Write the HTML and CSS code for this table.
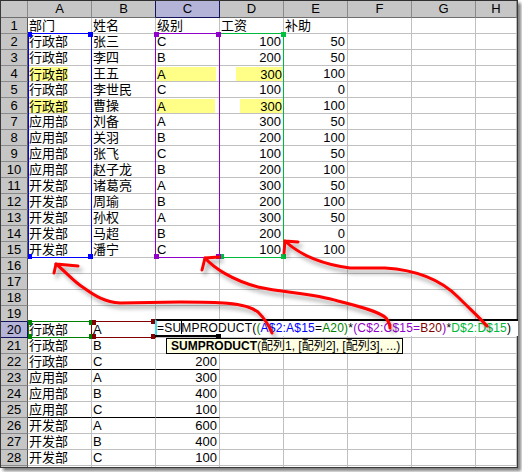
FILE: index.html
```html
<!DOCTYPE html>
<html>
<head>
<meta charset="utf-8">
<link rel="stylesheet" href="styles.css">
</head>
<body>
<div class="screen">
  <div class="sheet">
    <div class="row hdr"><div></div><div>A</div><div class="selL">B</div><div class="sel">C</div><div>D</div><div>E</div><div>F</div><div>G</div><div>H</div></div>
    <div class="row"><div class="rh">1</div><div>部门</div><div>姓名</div><div>级别</div><div>工资</div><div>补助</div><div></div><div></div><div></div></div>
    <div class="row"><div class="rh">2</div><div>行政部</div><div>张三</div><div>C</div><div class="n">100</div><div class="n">50</div><div></div><div></div><div></div></div>
    <div class="row"><div class="rh">3</div><div>行政部</div><div>李四</div><div>B</div><div class="n">200</div><div class="n">50</div><div></div><div></div><div></div></div>
    <div class="row"><div class="rh">4</div><div><span class="hl">行政部</span></div><div>王五</div><div><span class="hl hl-c4">A</span></div><div class="n"><span class="hl hl-d4">300</span></div><div class="n">100</div><div></div><div></div><div></div></div>
    <div class="row"><div class="rh">5</div><div>行政部</div><div>李世民</div><div>C</div><div class="n">100</div><div class="n">0</div><div></div><div></div><div></div></div>
    <div class="row"><div class="rh">6</div><div><span class="hl">行政部</span></div><div>曹操</div><div><span class="hl hl-c6">A</span></div><div class="n"><span class="hl hl-d6">300</span></div><div class="n">100</div><div></div><div></div><div></div></div>
    <div class="row"><div class="rh">7</div><div>应用部</div><div>刘备</div><div>A</div><div class="n">300</div><div class="n">50</div><div></div><div></div><div></div></div>
    <div class="row"><div class="rh">8</div><div>应用部</div><div>关羽</div><div>B</div><div class="n">200</div><div class="n">100</div><div></div><div></div><div></div></div>
    <div class="row"><div class="rh">9</div><div>应用部</div><div>张飞</div><div>C</div><div class="n">100</div><div class="n">50</div><div></div><div></div><div></div></div>
    <div class="row"><div class="rh">10</div><div>应用部</div><div>赵子龙</div><div>B</div><div class="n">200</div><div class="n">100</div><div></div><div></div><div></div></div>
    <div class="row"><div class="rh">11</div><div>开发部</div><div>诸葛亮</div><div>A</div><div class="n">300</div><div class="n">50</div><div></div><div></div><div></div></div>
    <div class="row"><div class="rh">12</div><div>开发部</div><div>周瑜</div><div>B</div><div class="n">200</div><div class="n">100</div><div></div><div></div><div></div></div>
    <div class="row"><div class="rh">13</div><div>开发部</div><div>孙权</div><div>A</div><div class="n">300</div><div class="n">50</div><div></div><div></div><div></div></div>
    <div class="row"><div class="rh">14</div><div>开发部</div><div>马超</div><div>B</div><div class="n">200</div><div class="n">0</div><div></div><div></div><div></div></div>
    <div class="row"><div class="rh">15</div><div>开发部</div><div>潘宁</div><div>C</div><div class="n">100</div><div class="n">100</div><div></div><div></div><div></div></div>
    <div class="row"><div class="rh">16</div><div></div><div></div><div></div><div></div><div></div><div></div><div></div><div></div></div>
    <div class="row"><div class="rh">17</div><div></div><div></div><div></div><div></div><div></div><div></div><div></div><div></div></div>
    <div class="row"><div class="rh">18</div><div></div><div></div><div></div><div></div><div></div><div></div><div></div><div></div></div>
    <div class="row"><div class="rh selT">19</div><div></div><div></div><div></div><div></div><div></div><div></div><div></div><div></div></div>
    <div class="row"><div class="rh sel">20</div><div>行政部</div><div>A</div><div></div><div></div><div></div><div></div><div></div><div></div></div>
    <div class="row"><div class="rh">21</div><div>行政部</div><div>B</div><div></div><div></div><div></div><div></div><div></div><div></div></div>
    <div class="row"><div class="rh">22</div><div class="bb">行政部</div><div class="bb">C</div><div class="n bb">200</div><div></div><div></div><div></div><div></div><div></div></div>
    <div class="row"><div class="rh">23</div><div>应用部</div><div>A</div><div class="n">300</div><div></div><div></div><div></div><div></div><div></div></div>
    <div class="row"><div class="rh">24</div><div>应用部</div><div>B</div><div class="n">400</div><div></div><div></div><div></div><div></div><div></div></div>
    <div class="row"><div class="rh">25</div><div class="bb">应用部</div><div class="bb">C</div><div class="n bb">100</div><div></div><div></div><div></div><div></div><div></div></div>
    <div class="row"><div class="rh">26</div><div>开发部</div><div>A</div><div class="n">600</div><div></div><div></div><div></div><div></div><div></div></div>
    <div class="row"><div class="rh">27</div><div>开发部</div><div>B</div><div class="n">400</div><div></div><div></div><div></div><div></div><div></div></div>
    <div class="row"><div class="rh">28</div><div>开发部</div><div>C</div><div class="n">100</div><div></div><div></div><div></div><div></div><div></div></div>
    <div class="row"><div class="rh"></div><div></div><div></div><div></div><div></div><div></div><div></div><div></div><div></div></div>
  </div>

  <!-- reference range outlines -->
  <div class="rng rng-green2"></div>
  <div class="rng rng-blue"></div>
  <div class="rng rng-purple"></div>
  <div class="hd hd-g2 h-d-tr"></div>
  <div class="hd hd-g2 h-d-br"></div>
  <div class="hd hd-g2 h-d-bl"></div>
  <div class="hd hd-b h-a-tl"></div>
  <div class="hd hd-b h-a-tr"></div>
  <div class="hd hd-b h-a-bl"></div>
  <div class="hd hd-b h-a-br"></div>
  <div class="hd hd-p h-c-tl"></div>
  <div class="hd hd-p h-c-tr"></div>
  <div class="hd hd-p h-c-bl"></div>
  <div class="hd hd-p h-c-br"></div>

  <div class="rng rng-a20"></div>
  <div class="rng rng-b20"></div>
  <div class="hd hd-g h-a20-tl"></div>
  <div class="hd hd-g h-a20-tr"></div>
  <div class="hd hd-g h-a20-bl"></div>
  <div class="hd hd-g h-a20-br"></div>
  <div class="hd hd-r h-b20-tl"></div>
  <div class="hd hd-r h-b20-bl"></div>
  <div class="hd hd-r h-b20-tr"></div>
  <div class="hd hd-r h-b20-br"></div>

  <!-- in-cell editing of C20 -->
  <div class="edit">=SU<span class="caret"></span>MPRODUCT(<span class="f-g">(</span><span class="f-b">A$2:A$15</span>=<span class="f-g">A20)</span>*<span class="f-p">(C$2:C$15=</span><span class="f-r">B20</span><span class="f-p">)</span>*<span class="f-g2">D$2:D$15</span>)</div>
  <div class="cellbot"></div>
  <div class="fillh"></div>

  <div class="tip"><b>SUMPRODUCT</b>(配列1, [配列2], [配列3], ...)</div>

  <svg class="arrows" width="522" height="472" viewBox="0 0 522 472">
    <defs>
      <filter id="sh" x="-20%" y="-20%" width="140%" height="140%">
        <feDropShadow dx="3" dy="4" stdDeviation="2" flood-color="#000" flood-opacity="0.35"/>
      </filter>
    </defs>
    <g fill="none" stroke="#ff0000" stroke-width="3" stroke-linecap="round" stroke-linejoin="round" filter="url(#sh)">
      <path d="M56,264 C66,272 74,282 84,288 C95,296 105,302 120,303 L180,302 C215,302 245,302 258,312 C266,320 270,328 272,333"/>
      <path d="M56,264 L78,266 M56,264 L54,273"/>
      <path d="M205,258 C214,268 232,280 258,287 C285,293 312,293 338,301 C362,307 380,312 386,318 C389,322 390,326 390,328"/>
      <path d="M205,258 L219,257 M205,258 L202,270"/>
      <path d="M285,241 C300,255 320,264 350,268 L385,268 C418,270 442,281 458,297 C470,309 480,318 487,326"/>
      <path d="M285,241 L298,242 M285,241 L284,253"/>
    </g>
  </svg>
</div>
</body>
</html>
```

FILE: styles.css
```css
body {
  margin: 0;
  background: #ffffff;
  font-family: "Liberation Sans", "Noto Sans CJK SC", sans-serif;
  font-size: 13px;
  color: #000;
}

.screen {
  position: relative;
  width: 522px;
  height: 472px;
  overflow: hidden;
}

.sheet {
  width: 518px;
  height: 468px;
  box-sizing: border-box;
  border: 1px solid #3a3a3a;
  border-top-color: #303030;
  box-shadow: 3px 3px 3px rgba(0, 0, 0, 0.5);
  overflow: hidden;
  background: #ffffff;
}

.row {
  display: grid;
  grid-template-columns: 27px repeat(7, 64px) 41px;
  height: 16px;
}

.row > div {
  box-sizing: border-box;
  border-right: 1px solid #c0c0c0;
  border-bottom: 1px solid #c0c0c0;
  line-height: 15px;
  padding: 0 2px 0 1px;
  white-space: nowrap;
  overflow: hidden;
}

.row > .n {
  text-align: right;
  padding: 0 2px 0 0;
}

.row > .bb {
  border-bottom-color: #000000;
}

.row.hdr {
  height: 17px;
}

.row.hdr > div {
  background: #c6c6c6;
  border-right-color: #8a8a8a;
  border-bottom-color: #6e6e6e;
  text-align: center;
  line-height: 16px;
  padding: 0;
}

.row.hdr > .sel {
  background: #b4b4d8;
  border-right-color: #14145a;
  border-bottom-color: #14145a;
}

.row.hdr > .selL {
  border-right-color: #14145a;
}

.row > .rh {
  background: #c6c6c6;
  border-right-color: #5a5a5a;
  border-bottom-color: #8a8a8a;
  text-align: center;
  padding: 0;
}

.row > .rh.sel {
  background: #b4b4d8;
  border-right-color: #14145a;
  border-bottom-color: #14145a;
}

.row > .rh.selT {
  border-bottom-color: #14145a;
}

.hl {
  display: inline-block;
  background: #ffff88;
  height: 14px;
  line-height: 15px;
  vertical-align: top;
  margin-top: 1px;
}

.hl-c4 { width: 59px; }
.hl-c6 { width: 58px; }
.hl-d4 { width: 46px; text-align: right; margin-right: -1px; }
.hl-d6 { width: 42px; text-align: right; margin-right: -1px; }

/* range outlines */
.rng {
  position: absolute;
  box-sizing: border-box;
  border: 1px solid;
}

.rng-blue { left: 28px; top: 33px; width: 64px; height: 225px; border-color: #0000ff; }
.rng-purple { left: 155px; top: 33px; width: 65px; height: 225px; border-color: #9000c8; }
.rng-green2 { left: 219px; top: 33px; width: 65px; height: 225px; border-color: #00b83a; }
.rng-a20 { left: 28px; top: 321px; width: 64px; height: 17px; border-color: #008000; }
.rng-b20 { left: 91px; top: 321px; width: 65px; height: 17px; border-color: #800000; }

.hd {
  position: absolute;
  width: 5px;
  height: 5px;
}

.hd-b { background: #0000ff; }
.hd-p { background: #9000c8; }
.hd-g2 { background: #00c040; }
.hd-g { background: #008000; }
.hd-r { background: #800000; width: 4px; }

.h-a-tl { left: 28px; top: 32px; width: 4px; }
.h-a-tr { left: 88px; top: 32px; }
.h-a-bl { left: 28px; top: 254px; width: 4px; }
.h-a-br { left: 88px; top: 254px; }

.h-c-tl { left: 154px; top: 32px; }
.h-c-tr { left: 216px; top: 32px; }
.h-c-bl { left: 154px; top: 254px; }
.h-c-br { left: 216px; top: 254px; }

.h-d-tr { left: 281px; top: 32px; }
.h-d-br { left: 281px; top: 254px; }
.h-d-bl { left: 219px; top: 254px; }

.h-a20-tl { left: 28px; top: 320px; width: 4px; }
.h-a20-tr { left: 89px; top: 320px; }
.h-a20-bl { left: 28px; top: 334px; width: 4px; }
.h-a20-br { left: 89px; top: 334px; }

.h-b20-tl { left: 92px; top: 320px; }
.h-b20-bl { left: 92px; top: 334px; }
.h-b20-tr { left: 151px; top: 319px; }
.h-b20-br { left: 151px; top: 334px; }

/* in-cell editor */
.edit {
  position: absolute;
  left: 155px;
  top: 319px;
  width: 363px;
  height: 17px;
  box-sizing: border-box;
  background: #ffffff;
  border-top: 2px solid #000000;
  border-left: 2px solid #40e0f0;
  padding-left: 0;
  font-size: 12px;
  letter-spacing: 0.2px;
  line-height: 15px;
  white-space: nowrap;
}

.caret {
  display: inline-block;
  width: 1px;
  height: 13px;
  margin-right: -1px;
  background: #000;
  vertical-align: -2px;
}

.f-b { color: #0000ff; }
.f-g { color: #008000; }
.f-p { color: #9000c8; }
.f-r { color: #800000; }
.f-g2 { color: #00b83a; }

.cellbot {
  position: absolute;
  left: 155px;
  top: 335px;
  width: 62px;
  height: 2px;
  background: #000000;
}

.fillh {
  position: absolute;
  left: 216px;
  top: 334px;
  width: 5px;
  height: 5px;
  background: #000000;
}

.tip {
  position: absolute;
  left: 166px;
  top: 338px;
  width: 237px;
  height: 16px;
  box-sizing: border-box;
  background: #ffffe1;
  border: 1px solid #000000;
  font-family: "Liberation Sans", "Noto Sans CJK JP", sans-serif;
  font-size: 12px;
  line-height: 14px;
  padding-left: 4px;
  white-space: nowrap;
}

.arrows {
  position: absolute;
  left: 0;
  top: 0;
  pointer-events: none;
}
```
